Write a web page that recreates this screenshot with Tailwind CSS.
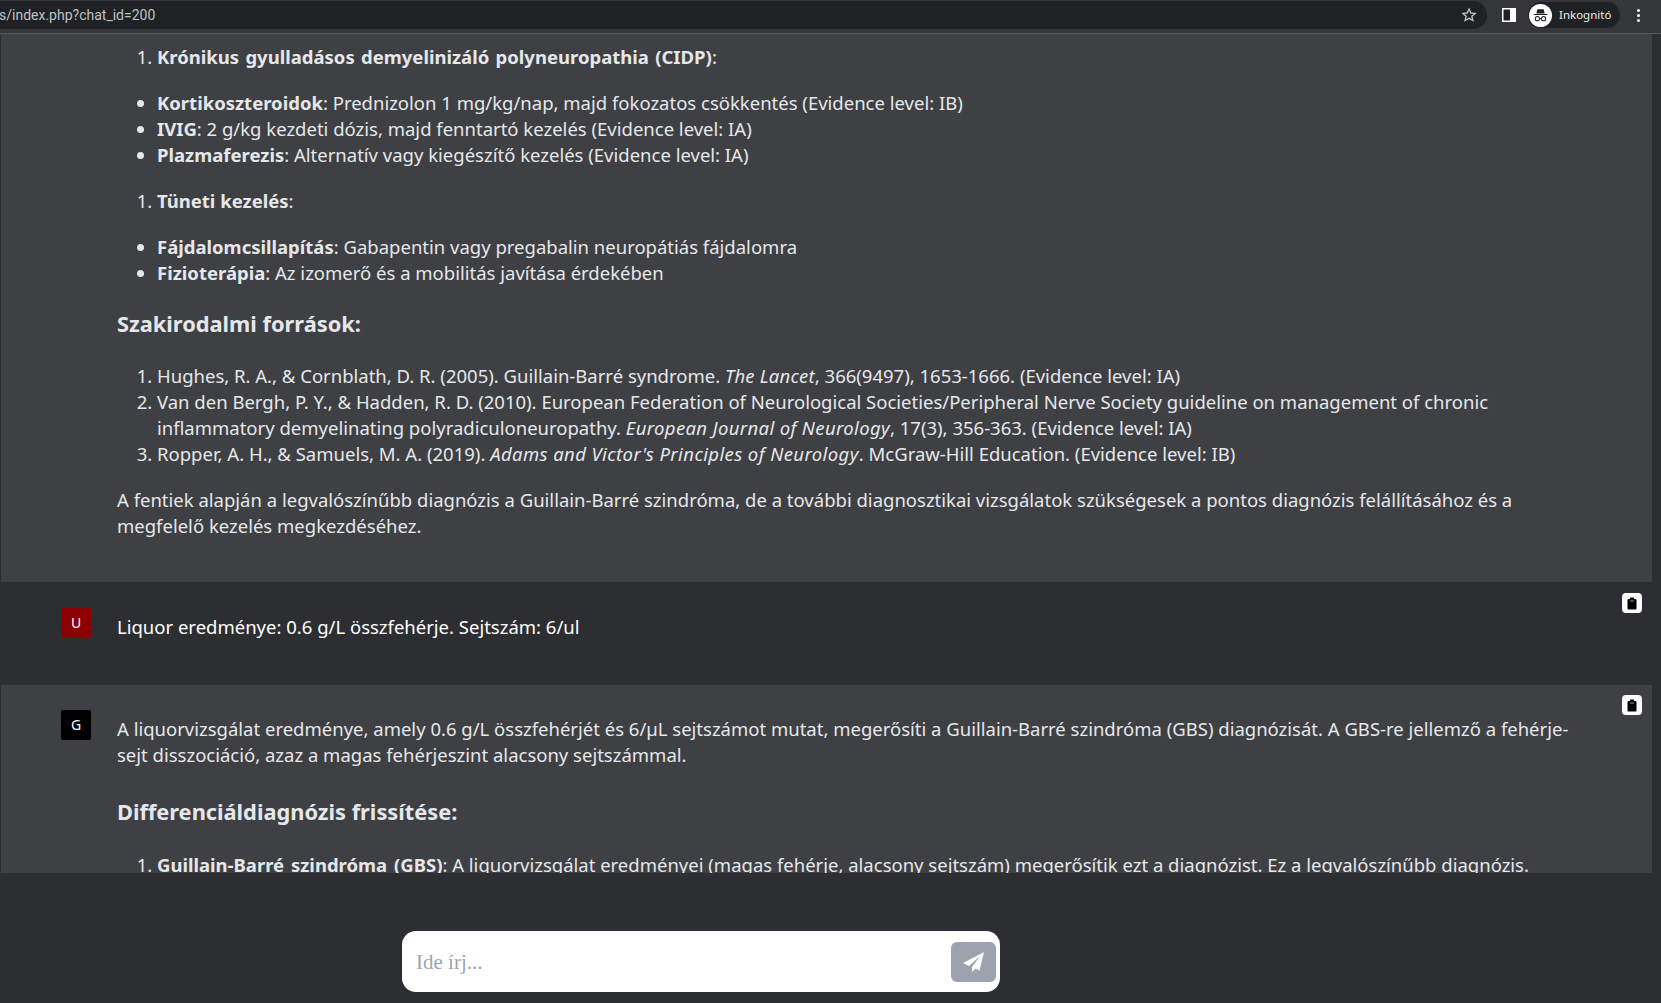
<!DOCTYPE html>
<html lang="hu"><head><meta charset="utf-8"><script src="https://cdn.jsdelivr.net/npm/@tailwindcss/browser@4"></script></head>
<body class="m-0 h-[1003px] w-[1661px] overflow-hidden bg-[#2d2e32] font-['Noto_Sans',sans-serif] text-[18.5px] leading-[26px] text-[#e5e7eb]">
<header class="flex h-[34px] items-center border-b border-[#55565a] bg-[#35363a] pb-[3px] pr-[20px]">
  <div class="flex h-[28px] flex-1 items-center rounded-r-[15px] bg-[#202124] font-['Roboto',sans-serif] text-[14px] text-[#bdc1c6]">
    <span class="-ml-px flex-1">s/index.php?chat_id=200</span>
    <svg class="mr-[10px] h-4 w-4" viewBox="0 0 24 24" fill="none" stroke="#bdc1c6" stroke-width="2"><path d="M12 3l2.700 6 6.500.6-4.900 4.300 1.500 6.400L12 17l-5.800 3.300 1.500-6.400-4.900-4.300 6.500-.6z"/></svg>
  </div>
  <svg class="ml-[15px] h-[14px] w-[14px]" viewBox="0 0 14 14"><rect width="14" height="14" fill="#fff"/><rect x="1.500" y="1.500" width="6.500" height="11" fill="#202124"/></svg>
  <div class="ml-[12px] flex h-[26px] w-[92px] items-center rounded-full bg-[#202124]">
    <svg class="ml-px h-[23px] w-[23px]" viewBox="0 0 22 22"><circle cx="11" cy="11" r="11" fill="#fff"/><path d="M7 9l1-4h6l1 4zM4.500 9.500h13v1h-13z" fill="#202124"/><circle cx="8" cy="14" r="2" fill="none" stroke="#202124"/><circle cx="14" cy="14" r="2" fill="none" stroke="#202124"/><path d="M10 14h2" stroke="#202124"/></svg>
    <span class="ml-[7px] text-[11.5px] leading-none text-[#e8eaed]">Inkognitó</span>
  </div>
  <div class="ml-[17px] flex w-[4px] flex-col gap-[2px]"><i class="h-[3px] w-[3px] rounded-full bg-white"></i><i class="h-[3px] w-[3px] rounded-full bg-white"></i><i class="h-[3px] w-[3px] rounded-full bg-white"></i></div>
</header>
<main class="h-[839px] overflow-hidden pl-px pr-[9px]">
  <section class="h-[548px] bg-[#3f4043] pl-[116px] pr-[72px] pt-[10px]">
    <ol class="list-decimal pl-10"><li><b class="[word-spacing:1.5px]">Krónikus gyulladásos demyelinizáló polyneuropathia (CIDP)</b>:</li></ol>
    <ul class="mt-5 list-disc pl-10">
      <li><b>Kortikoszteroidok</b>: Prednizolon 1 mg/kg/nap, majd fokozatos csökkentés (Evidence level: IB)</li>
      <li><b>IVIG</b>: 2 g/kg kezdeti dózis, majd fenntartó kezelés (Evidence level: IA)</li>
      <li><b>Plazmaferezis</b>: Alternatív vagy kiegészítő kezelés (Evidence level: IA)</li>
    </ul>
    <ol class="mt-5 list-decimal pl-10"><li><b>Tüneti kezelés</b>:</li></ol>
    <ul class="mt-5 list-disc pl-10">
      <li><b>Fájdalomcsillapítás</b>: Gabapentin vagy pregabalin neuropátiás fájdalomra</li>
      <li><b>Fizioterápia</b>: Az izomerő és a mobilitás javítása érdekében</li>
    </ul>
    <h3 class="mt-[23px] text-[21.8px] font-bold leading-[30px]">Szakirodalmi források:</h3>
    <ol class="mt-[24px] list-decimal pl-10">
      <li>Hughes, R. A., &amp; Cornblath, D. R. (2005). Guillain-Barré syndrome. <i class="tracking-[0.2px]">The Lancet</i>, 366(9497), 1653-1666. (Evidence level: IA)</li>
      <li>Van den Bergh, P. Y., &amp; Hadden, R. D. (2010). European Federation of Neurological Societies/Peripheral Nerve Society guideline on management of chronic inflammatory demyelinating polyradiculoneuropathy. <i class="tracking-[0.35px]">European Journal of Neurology</i>, 17(3), 356-363. (Evidence level: IA)</li>
      <li>Ropper, A. H., &amp; Samuels, M. A. (2019). <i class="tracking-[0.4px]">Adams and Victor's Principles of Neurology</i>. McGraw-Hill Education. (Evidence level: IB)</li>
    </ol>
    <p class="mt-5">A fentiek alapján a legvalószínűbb diagnózis a Guillain-Barré szindróma, de a további diagnosztikai vizsgálatok szükségesek a pontos diagnózis felállításához és a megfelelő kezelés megkezdéséhez.</p>
  </section>
  <section class="relative flex h-[103px] gap-[26px] bg-[#2d2e32] pl-[60px] pr-[72px] pt-[26px]">
    <div class="flex h-[30px] w-[30px] shrink-0 items-center justify-center rounded-[2px] bg-[#8b0000] text-[14px] text-white">U</div>
    <p class="pt-[6px] text-white">Liquor eredménye: 0.6 g/L összfehérje. Sejtszám: 6/ul</p>
    <button class="absolute right-[10px] top-[11px] flex h-5 w-5 items-center justify-center rounded-[4px] bg-white"><svg class="h-[14px] w-[14px]" viewBox="0 0 14 14"><path d="M5 1.500h4v1.500h1.500q1 0 1 1v8.500q0 1-1 1h-7q-1 0-1-1V4q0-1 1-1H5z" fill="#000"/><rect x="5" y="4.500" width="4" height="1" fill="#999"/></svg></button>
  </section>
  <section class="relative flex h-[188px] gap-[26px] bg-[#3f4043] pl-[60px] pr-[72px] pt-[25px]">
    <div class="flex h-[30px] w-[30px] shrink-0 items-center justify-center rounded-[2px] bg-black text-[14px] text-white">G</div>
    <div class="pt-[6px]">
      <p>A liquorvizsgálat eredménye, amely 0.6 g/L összfehérjét és 6/µL sejtszámot mutat, megerősíti a Guillain-Barré szindróma (GBS) diagnózisát. A GBS-re jellemző a fehérje-sejt disszociáció, azaz a magas fehérjeszint alacsony sejtszámmal.</p>
      <h3 class="mt-[29px] text-[21.8px] font-bold leading-[30px]">Differenciáldiagnózis frissítése:</h3>
      <ol class="mt-[25px] list-decimal pl-10"><li><b class="[word-spacing:2px]">Guillain-Barré szindróma (GBS)</b>: A liquorvizsgálat eredményei (magas fehérje, alacsony sejtszám) megerősítik ezt a diagnózist. Ez a legvalószínűbb diagnózis.</li></ol>
    </div>
    <button class="absolute right-[10px] top-[10px] flex h-5 w-5 items-center justify-center rounded-[4px] bg-white"><svg class="h-[14px] w-[14px]" viewBox="0 0 14 14"><path d="M5 1.500h4v1.500h1.500q1 0 1 1v8.500q0 1-1 1h-7q-1 0-1-1V4q0-1 1-1H5z" fill="#000"/><rect x="5" y="4.500" width="4" height="1" fill="#999"/></svg></button>
  </section>
</main>
<div class="flex h-[130px] pl-[402px] pt-[58px]">
  <div class="flex h-[61px] w-[598px] items-center justify-between rounded-[14px] bg-white pl-[14px] pr-[4px]">
    <span class="font-['Liberation_Serif',serif] text-[21px] text-[#9ca3af]">Ide írj...</span>
    <div class="flex h-10 w-[45px] items-center justify-center rounded-[6px] bg-[#9ca3af]"><svg class="h-[24px] w-[24px]" viewBox="0 0 24 24" fill="#fff"><path d="M22 2 1 13l6 3 11-10-8 11v5l3.500-3.500 4 2z"/></svg></div>
  </div>
</div>
</body></html>
